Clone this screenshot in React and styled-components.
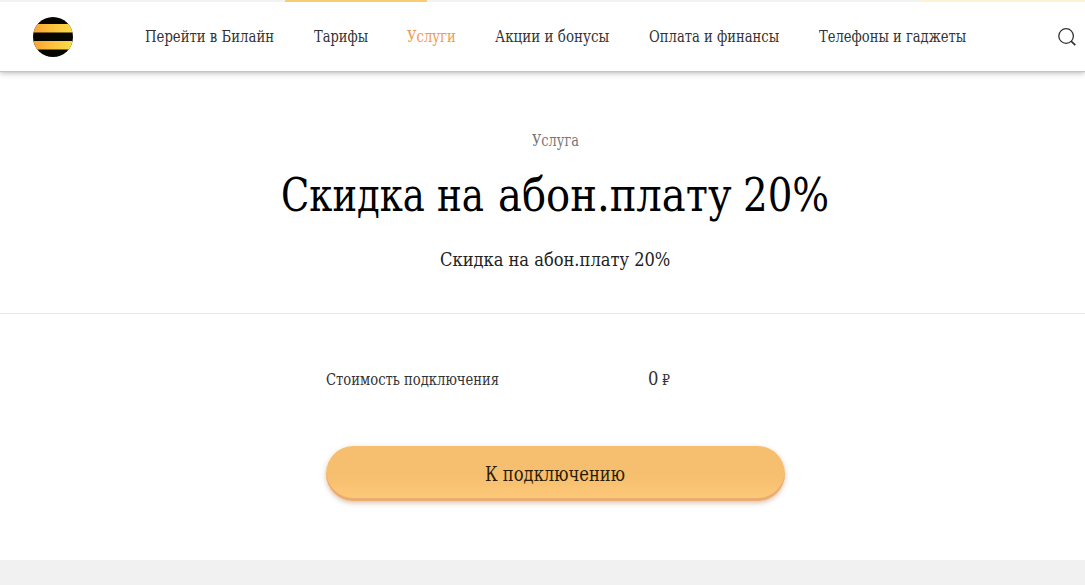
import styled, { createGlobalStyle } from "styled-components"

const links = [
    { label: "Перейти в Билайн", width: 130, scale: 0.92 },
    { label: "Тарифы", width: 54, scale: 0.905 },
    { label: "Услуги", width: 49, scale: 0.915, active: true },
    { label: "Акции и бонусы", width: 115, scale: 0.936 },
    { label: "Оплата и финансы", width: 131, scale: 0.913 },
    { label: "Телефоны и гаджеты", width: 148, scale: 0.91 },
]

const titleWords = [
    { text: "Скидка", width: 156, scale: 0.893 },
    { text: "на", width: 61, scale: 0.9 },
    { text: "абон.плату", width: 245, scale: 0.969 },
    { text: "20%", width: 87, scale: 0.937 },
]

const Logo = () => (
    <svg width="40" height="40" viewBox="0 0 40 40">
        <defs>
            <linearGradient id="stripe" x1="0" x2="1" y1="0" y2="0">
                <stop offset="0" stopColor="#f7a233" />
                <stop offset="0.45" stopColor="#fcc03c" />
                <stop offset="1" stopColor="#fbdc4a" />
            </linearGradient>
            <clipPath id="disc"><circle cx="20" cy="20" r="20" /></clipPath>
        </defs>
        <g clipPath="url(#disc)">
            <rect width="40" height="40" fill="#060500" />
            <rect y="7" width="40" height="8.5" fill="url(#stripe)" />
            <rect y="24" width="40" height="8.5" fill="url(#stripe)" />
        </g>
    </svg>
)

const SearchIcon = () => (
    <svg width="18" height="18" viewBox="0 0 18 18" fill="none" stroke="#333" strokeWidth="1.3">
        <circle cx="8.1" cy="8" r="7.3" />
        <path d="M13.1 13.2 L17.3 17.2" strokeWidth="1.7" />
    </svg>
)

// narrow slab lettering, squeezed into the given width
const Narrow = ({ width, scale, children }) => (
    <Slot $width={width}>
        <Squeezed $scale={scale}>{children}</Squeezed>
    </Slot>
)

export default function App() {
    return (
        <Page>
            <GlobalStyle />
            <TopStrip>
                <Tab />
                <PaleTab />
            </TopStrip>
            <Header>
                <Logo />
                <Nav>
                    {links.map(link => (
                        <NavLink key={link.label} $active={link.active}>
                            <Narrow width={link.width} scale={link.scale}>{link.label}</Narrow>
                        </NavLink>
                    ))}
                </Nav>
                <SearchIcon />
            </Header>
            <Hero>
                <Kicker><Narrow width={47} scale={0.9}>Услуга</Narrow></Kicker>
                <Title>
                    {titleWords.map(word => (
                        <Narrow key={word.text} width={word.width} scale={word.scale}>{word.text} </Narrow>
                    ))}
                </Title>
                <Subtitle><Narrow width={231} scale={0.952}>Скидка на абон.плату 20%</Narrow></Subtitle>
            </Hero>
            <Details>
                <PriceRow>
                    <PriceLabel><Narrow width={322} scale={0.913}>Стоимость подключения</Narrow></PriceLabel>
                    <Price>
                        <Narrow width={14} scale={0.96}>0</Narrow>
                        <Currency>₽</Currency>
                    </Price>
                </PriceRow>
                <ConnectButton><Narrow width={141} scale={0.932}>К подключению</Narrow></ConnectButton>
            </Details>
            <Footer />
        </Page>
    )
}

const GlobalStyle = createGlobalStyle`
body {
  margin: 0;
  background: #fff;
}
`

const Page = styled.div`
display: flex;
flex-direction: column;
height: 585px;
overflow: hidden;
font-family: "DejaVu Serif Condensed", "DejaVu Serif", serif;
font-stretch: condensed;
`

const Slot = styled.span`
display: inline-block;
width: ${props => props.$width}px;
text-align: left;
white-space: nowrap;
`

const Squeezed = styled.span`
display: inline-block;
transform: scaleX(${props => props.$scale});
transform-origin: left;
`

const TopStrip = styled.div`
display: flex;
justify-content: space-between;
flex: none;
height: 2px;
padding-left: 285px;
background: #f2f3f3;
`

const Tab = styled.div`
width: 142px;
background: #f8cd74;
`

const PaleTab = styled.div`
width: 165px;
background: #fdf4d3;
`

const Header = styled.header`
display: flex;
align-items: center;
flex: none;
height: 69px;
padding: 0 9px 0 33px;
background: #fff;
box-shadow: 0 1px 1px #c4c4c4, 0 2px 6px rgba(0, 0, 0, 0.28);
clip-path: inset(0 0 -12px 0);
`

const Nav = styled.nav`
display: flex;
gap: 39px;
flex: 1;
margin-left: 72px;
`

const NavLink = styled.a`
font-size: 16px;
line-height: 20px;
color: ${props => props.$active ? "#f19a50" : "#333"};
`

const Hero = styled.section`
display: flex;
flex-direction: column;
align-items: center;
box-sizing: border-box;
flex: none;
height: 243px;
padding: 60px 0 0 26px;
border-bottom: 1px solid #e6e6e6;
`

const Kicker = styled.div`
font-size: 16px;
line-height: 20px;
color: #777;
`

const Title = styled.h1`
display: flex;
margin: 14px 0 0;
font-size: 46px;
font-weight: 400;
line-height: 60px;
color: #000;
`

const Subtitle = styled.p`
margin: 22px 0 0;
font-size: 19px;
line-height: 24px;
color: #222;
`

const Details = styled.section`
display: flex;
flex-direction: column;
flex: none;
width: 459px;
height: 246px;
margin-left: 326px;
`

const PriceRow = styled.div`
display: flex;
align-items: baseline;
height: 24px;
margin-top: 52px;
line-height: 24px;
color: #333;
`

const PriceLabel = styled.span`
font-size: 16px;
`

const Price = styled.span`
font-size: 19px;
`

const Currency = styled.span`
font-size: 14px;
`

const ConnectButton = styled.button`
height: 55px;
margin-top: 56px;
padding: 2px 0 0;
border: 0;
border-radius: 28px;
background: linear-gradient(#f6bf6f 55%, #fdca79);
box-shadow: inset 0 -3px 0 #e8ad75, 0 2px 5px rgba(150, 80, 20, 0.35);
font-family: inherit;
font-stretch: inherit;
font-size: 19.5px;
line-height: 24px;
color: #2b1c05;
`

const Footer = styled.footer`
flex: 1;
background: #f1f1f1;
`
